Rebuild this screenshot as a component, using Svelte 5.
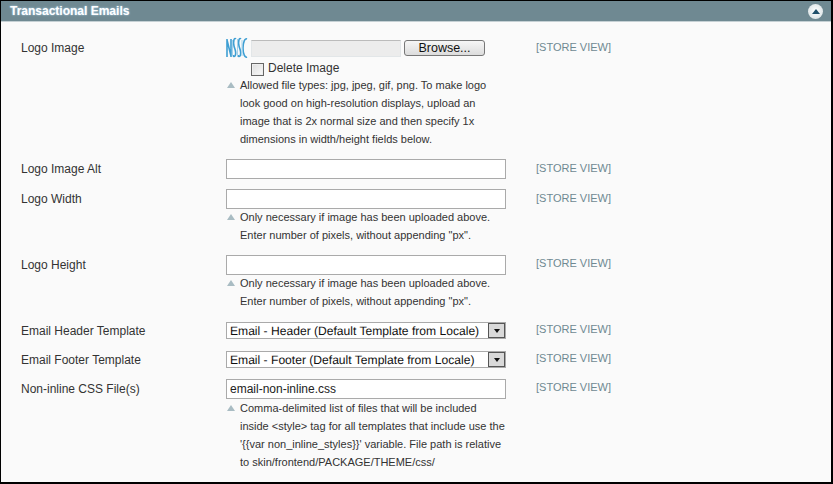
<script>
  const scope = '[STORE VIEW]';
  const px = ['Only necessary if image has been uploaded above.', 'Enter number of pixels, without appending "px".'];
</script>

<div class="panel">
  <header class="head">
    <h3>Transactional Emails</h3>
    <span class="collapse"><i></i></span>
  </header>

  <div class="form">
    <div class="row first">
      <span class="label">Logo Image</span>
      <div class="value">
        <div class="file">
          <svg class="thumb" width="22" height="22" viewBox="0 0 22 22" aria-hidden="true">
            <g fill="none" stroke="#3f9fd3" stroke-width="1.6">
              <path d="M1 2v18M1 3l4 16M5 2v18" />
              <path d="M10 2c-2-2-3 3-2 7s3 7 1 10c-1 1-2 0-2-1" />
              <path d="M15 2c-2-2-3 3-2 7s3 7 1 10c-1 1-2 0-2-1" />
              <path d="M21 2c-2-1-4 3-4 9s2 10 4 9" />
              <path d="M6.5 3v16M11.5 2v18M16 3v16" stroke="#a5d2ea" stroke-width="1" />
            </g>
          </svg>
          <span class="filebox"></span>
          <button class="browse" type="button">Browse...</button>
        </div>
        <label class="del"><span class="check"></span>Delete Image</label>
        <p class="note">Allowed file types: jpg, jpeg, gif, png. To make logo<br />look good on high-resolution displays, upload an<br />image that is 2x normal size and then specify 1x<br />dimensions in width/height fields below.</p>
      </div>
      <span class="scope">{scope}</span>
    </div>

    <div class="row">
      <span class="label">Logo Image Alt</span>
      <div class="value"><div class="input"></div></div>
      <span class="scope">{scope}</span>
    </div>

    <div class="row noted">
      <span class="label">Logo Width</span>
      <div class="value">
        <div class="input"></div>
        <p class="note">{px[0]}<br />{px[1]}</p>
      </div>
      <span class="scope">{scope}</span>
    </div>

    <div class="row noted tall">
      <span class="label">Logo Height</span>
      <div class="value">
        <div class="input"></div>
        <p class="note">{px[0]}<br />{px[1]}</p>
      </div>
      <span class="scope">{scope}</span>
    </div>

    <div class="row sel">
      <span class="label">Email Header Template</span>
      <div class="value">
        <div class="select"><span>Email - Header (Default Template from Locale)</span><b><i></i></b></div>
      </div>
      <span class="scope">{scope}</span>
    </div>

    <div class="row sel last">
      <span class="label">Email Footer Template</span>
      <div class="value">
        <div class="select"><span>Email - Footer (Default Template from Locale)</span><b><i></i></b></div>
      </div>
      <span class="scope">{scope}</span>
    </div>

    <div class="row css">
      <span class="label">Non-inline CSS File(s)</span>
      <div class="value">
        <div class="input filled">email-non-inline.css</div>
        <p class="note">Comma-delimited list of files that will be included<br />inside &lt;style&gt; tag for all templates that include use the<br />'&#123;&#123;var non_inline_styles&#125;&#125;' variable. File path is relative<br />to skin/frontend/PACKAGE/THEME/css/</p>
      </div>
      <span class="scope">{scope}</span>
    </div>
  </div>
</div>

<style>
  :global(body) { margin: 0; }

  .panel {
    box-sizing: border-box;
    width: 833px; height: 484px; overflow: hidden;
    border: 1px solid #000; border-width: 1px 2px 2px 1px;
    background: #fafafa;
    font-family: "Liberation Sans", Arial, sans-serif;
    font-size: 12px; color: #333;
  }

  .head {
    display: flex; align-items: center; justify-content: space-between;
    height: 20px; padding: 0 9px;
    background: #6f8992;
    border-bottom: 1px solid #c5d0d4;
  }
  .head h3 {
    margin: 0; font-size: 12px; font-weight: bold; color: #fff;
    text-shadow: 0 0 2px #b9e3ff;
  }
  .collapse {
    display: flex; align-items: center; justify-content: center;
    width: 15px; height: 15px; border-radius: 50%; margin-right: -1px;
    background: radial-gradient(circle at 50% 45%, #fff, #dfe6e8 70%, #b4c2c7);
  }
  .collapse i {
    width: 0; height: 0;
    border: 4px solid transparent; border-top: 0; border-bottom: 5px solid #1f4f6a;
  }

  .form { padding: 16px 0 0 20px; }

  .row {
    display: grid; grid-template-columns: 205px 280px auto;
    padding-bottom: 10px;
  }
  .row.first { padding-bottom: 11px; }
  .row.noted { padding-bottom: 11px; }
  .row.noted.tall { padding-bottom: 12px; }
  .row.sel { padding-bottom: 11px; }
  .row.sel.last { padding-bottom: 10px; }

  .label { line-height: 20px; color: #333; }
  .sel .label { line-height: 18px; }
  .scope {
    margin-left: 30px; line-height: 18px;
    font-size: 11px; color: #6f8992;
  }
  .sel .scope { line-height: 14px; }
  .tall .scope, .css .scope { line-height: 16px; }

  .file { display: flex; align-items: center; height: 20px; }
  .thumb { flex: none; margin-right: 3px; }
  .filebox {
    width: 148px; height: 15px; margin-right: 3px;
    background: #ececec; border: 1px solid #e2e6e8; border-top-color: #bbb;
  }
  .browse {
    box-sizing: border-box;
    width: 81px; height: 16px; padding: 0; margin: 0;
    font: 12.5px "Liberation Sans", Arial, sans-serif; line-height: 14px; color: #111;
    border: 1px solid #777; border-radius: 3px;
    background: linear-gradient(#f6f6f6, #dcdcdc);
  }

  .del {
    display: flex; align-items: center; height: 16px; margin: 2px 0 1px 25px;
    font-size: 12px; color: #333;
  }
  .check {
    box-sizing: border-box;
    width: 13px; height: 13px; margin: 2px 4px 0 0;
    border: 1px solid #666; background: linear-gradient(135deg, #ddd, #fafafa);
    box-shadow: inset 0 0 0 1px #eee;
  }

  .input {
    box-sizing: border-box;
    width: 280px; height: 20px; padding: 0 3px;
    background: #fff; border: 1px solid #aaa;
    line-height: 18px; font-size: 12px; color: #222;
  }

  .note {
    position: relative;
    margin: -1px 0 0; padding: 0 0 0 14px;
    font-size: 11px; line-height: 18px; color: #333;
  }
  .css .note { margin-top: 0; }
  .note::before {
    content: ''; position: absolute; left: 1px; top: 6px;
    border: 4px solid transparent; border-top: 0; border-bottom: 6px solid #a9bcc3;
  }

  .select {
    box-sizing: border-box;
    display: flex; align-items: center; justify-content: space-between;
    width: 280px; height: 17px; padding-left: 3px;
    background: #fff; border: 1px solid #aaa;
    font-size: 12.1px; color: #111;
    text-rendering: geometricPrecision;
  }
  .select b {
    box-sizing: border-box;
    display: flex; align-items: center; justify-content: center;
    width: 17px; height: 15px;
    border: 1px solid #555; background: #d9d9d9;
  }
  .select i {
    width: 0; height: 0;
    border: 3.5px solid transparent; border-bottom: 0; border-top: 4px solid #111;
  }
</style>
